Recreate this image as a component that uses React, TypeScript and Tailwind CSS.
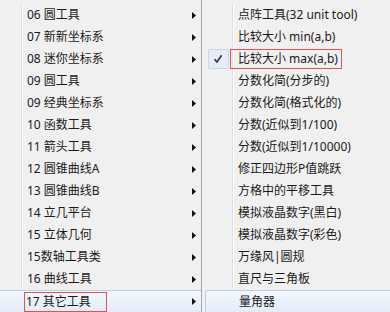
const leftItems = [
  "06 圆工具",
  "07 新新坐标系",
  "08 迷你坐标系",
  "09 圆工具",
  "09 经典坐标系",
  "10 函数工具",
  "11 箭头工具",
  "12 圆锥曲线A",
  "13 圆锥曲线B",
  "14 立几平台",
  "15 立体几何",
  "15数轴工具类",
  "16 曲线工具",
  "17 其它工具",
];

const rightItems = [
  "点阵工具(32 unit tool)",
  "比较大小 min(a,b)",
  "比较大小 max(a,b)",
  "分数化简(分步的)",
  "分数化简(格式化的)",
  "分数(近似到1/100)",
  "分数(近似到1/10000)",
  "修正四边形P值跳跃",
  "方格中的平移工具",
  "模拟液晶数字(黑白)",
  "模拟液晶数字(彩色)",
  "万缘风|圆规",
  "直尺与三角板",
  "量角器",
];

function Arrow() {
  return (
    <svg width="4" height="7" viewBox="0 0 4 7" className="shrink-0">
      <path d="M0 0 L4 3.5 L0 7 Z" fill="#111" />
    </svg>
  );
}

function Check() {
  return (
    <div className="flex h-[20px] w-[21px] items-center justify-center rounded-[2px] border border-[#c9d6e6] bg-[#e6edf7]">
      <svg width="10" height="10" viewBox="0 0 10 10">
        <path d="M1.5 5.2 L4 8 L8.6 1.2" fill="none" stroke="#1e2f6e" strokeWidth="1.6" />
      </svg>
    </div>
  );
}

export default function App() {
  return (
    <div
      className="flex h-[312px] w-[390px] overflow-hidden bg-[#f1f0f0] text-[12px] text-[#1a1a1a]"
      style={{ fontFamily: '"Noto Sans", "Noto Sans CJK SC", sans-serif' }}
    >
      {/* left menu */}
      <div className="flex w-[201px] shrink-0 flex-col pt-[4px]">
        {leftItems.map((item, i) => {
          const active = i === leftItems.length - 1;
          return (
            <div
              key={item}
              className={
                active
                  ? "flex h-[22px] items-center border-t border-[#b9cde3] bg-gradient-to-b from-[#f3f7fd] to-[#e3ecf8] pr-[5px]"
                  : "flex h-[22px] items-center pr-[5px]"
              }
            >
              <div
                className={
                  active
                    ? "h-full w-[24px] shrink-0"
                    : "h-full w-[22px] shrink-0 border-r border-[#dfe0e0] shadow-[1px_0_0_#ffffff] mr-[2px]"
                }
              />
              <div className="flex-1 leading-[22px]">
                {active ? (
                  <span className="inline-block h-[20px] w-[83px] border border-[#dc5454] pl-[1px] leading-[18px]">
                    {item}
                  </span>
                ) : (
                  <span className="pl-[3px]">{item}</span>
                )}
              </div>
              <Arrow />
            </div>
          );
        })}
      </div>

      {/* right menu */}
      <div className="flex flex-1 flex-col border-l border-[#a7a7a7] pt-[4px]">
        {rightItems.map((item, i) => {
          const active = i === rightItems.length - 1;
          const checked = i === 2;
          return (
            <div
              key={item}
              className={
                active
                  ? "ml-[3px] flex h-[22px] items-center rounded-tl-[3px] border-l border-t border-[#b9cde3] bg-gradient-to-b from-[#f3f7fd] to-[#e3ecf8]"
                  : "flex h-[22px] items-center"
              }
            >
              <div
                className={
                  active
                    ? "h-full w-[28px] shrink-0"
                    : "flex h-full w-[31px] shrink-0 items-center justify-center border-r border-[#dfe0e0] pl-[2px] shadow-[1px_0_0_#ffffff]"
                }
              >
                {checked && <Check />}
              </div>
              {checked ? (
                <span className="ml-[-3px] inline-block h-[20px] w-[112px] border border-[#dc5454] pl-[7px] leading-[18px]">
                  {item}
                </span>
              ) : (
                <span className="pl-[5px] leading-[22px]">{item}</span>
              )}
            </div>
          );
        })}
      </div>
    </div>
  );
}
